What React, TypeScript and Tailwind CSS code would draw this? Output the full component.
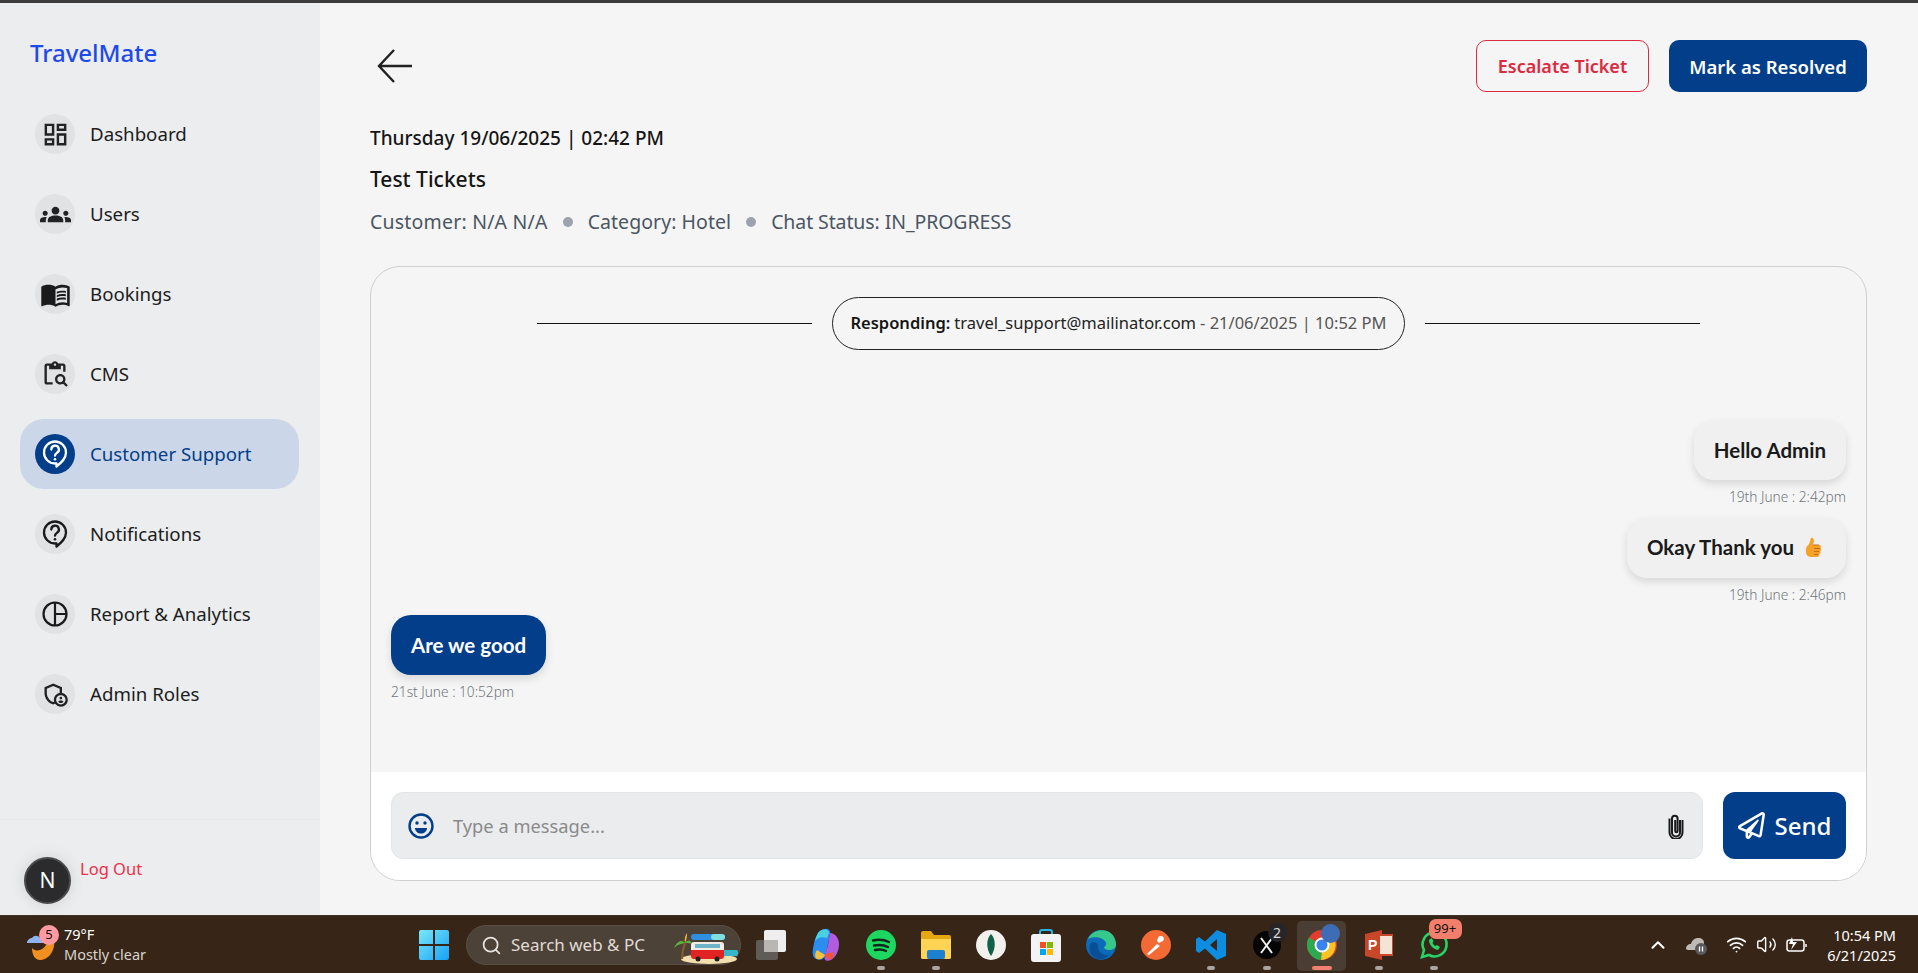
import React from "react";
import { MdOutlineDashboard, MdGroups, MdMenuBook, MdOutlineContentPasteSearch, MdOutlineAdminPanelSettings } from "react-icons/md";
import { FaRegPaperPlane } from "react-icons/fa";
import { Search, ChevronUp, Wifi, Volume2 } from "lucide-react";

const ChartIcon = () => (
  <svg width="26" height="26" viewBox="0 0 26 26" fill="none" stroke="#1a1a1a" strokeWidth="2.2">
    <circle cx="13" cy="13" r="11.5" />
    <path d="M13 1.5V24.5M13 13H24.5" />
  </svg>
);

const QuestionBubble = ({ color }: { color: string }) => (
  <svg width="26" height="29" viewBox="0 0 26 29" fill="none" stroke={color} strokeWidth="2.3" strokeLinejoin="round">
    <path d="M13 1.500a11 11 0 0 1 11 11c0 6-4.500 10-9.500 14v-3H13a10.500 10.500 0 0 1 0-22z" />
    <path d="M9.300 9.500a3.800 3.800 0 1 1 5.500 3.400c-1.200.7-1.800 1.400-1.800 2.800" strokeLinecap="round" />
    <circle cx="13" cy="19.200" r="1.300" fill={color} stroke="none" />
  </svg>
);

const nav = [
  { label: "Dashboard", icon: <MdOutlineDashboard size={29} color="#222" /> },
  { label: "Users", icon: <MdGroups size={31} color="#222" /> },
  { label: "Bookings", icon: <MdMenuBook size={31} color="#1a1a1a" /> },
  { label: "CMS", icon: <MdOutlineContentPasteSearch size={28} color="#222" /> },
  { label: "Customer Support", icon: <QuestionBubble color="#fff" />, active: true },
  { label: "Notifications", icon: <QuestionBubble color="#1a1a1a" /> },
  { label: "Report & Analytics", icon: <ChartIcon /> },
  { label: "Admin Roles", icon: <MdOutlineAdminPanelSettings size={28} color="#222" /> },
];

const Sidebar = () => (
  <aside className="w-[320px] shrink-0 bg-[#ebedef] flex flex-col">
    <div className="pl-[30px] pt-[33px] h-[96px] text-[24px] leading-[34px] text-[#1d4ae8] font-medium">TravelMate</div>
    <nav className="px-5 flex flex-col gap-[10px]">
      {nav.map((n) => (
        <div key={n.label} className={`h-[70px] w-[279px] rounded-[24px] pl-[15px] flex items-center gap-[15px] ${n.active ? "bg-[#cbd7e8] text-[#033e8a]" : "text-[#1c1c1c]"}`}>
          <span className={`w-10 h-10 rounded-full flex items-center justify-center ${n.active ? "bg-[#033e8a]" : "bg-[#e0e2e4]"}`}>{n.icon}</span>
          <span className="text-[18.700px] leading-6">{n.label}</span>
        </div>
      ))}
    </nav>
    <div className="flex-1" />
    <div className="h-[96px] border-t border-[#e4e6e8] pl-6 pt-[37px] flex items-start gap-[9px]">
      <span className="w-[47px] h-[47px] rounded-full bg-[#2b2b2d] border-2 border-[#4a4a4c] flex items-center justify-center text-white text-[21px] shadow-[0_0_16px_rgba(0,0,0,0.12)]">N</span>
      <span className="text-[#f0304a] text-[16.500px] leading-[22px] mt-[1px]">Log Out</span>
    </div>
  </aside>
);

const Dot = () => <span className="w-[10px] h-[10px] rounded-full bg-[#9ca3af] mx-[15px]" />;

const Bubble = ({ text, time, mine, extra }: { text: string; time: string; mine?: boolean; extra?: React.ReactNode }) => (
  <div className={`flex flex-col ${mine ? "items-end" : "items-start"}`}>
    <div className={`h-[60px] px-5 rounded-[20px] flex items-center gap-[10px] text-[20.500px] font-['Lato',sans-serif] font-bold shadow-[0_4px_8px_rgba(0,0,0,0.12)] ${mine ? "bg-[#f0f0f0] text-[#1a1a1a]" : "bg-[#033e8a] text-white"}`}>
      {text}
      {extra}
    </div>
    <div className="text-[13.700px] leading-[18px] mt-[8px] font-light text-[#70757c]">{time}</div>
  </div>
);

const Thumb = () => (
  <svg width="18" height="21" viewBox="0 0 18 21" className="mr-[4px]">
    <path d="M7 1c2-1 3 1 3 3l-1 4h6c2 0 2.500 2 1.500 3 1 1 .8 2.500-.2 3 .6 1 .3 2.400-.8 3 .2 1.500-.8 3-2.500 3H8c-3 0-6-1-6-5v-3c0-2 1.500-3 3-5 1-1.500 1-4 2-6z" fill="#f4a22c" />
    <path d="M9 8h6M10 11.500h6M10 14.500h5M10 17.500h4" stroke="#c96f12" strokeWidth="1" />
  </svg>
);

const Main = () => (
  <main className="flex-1 min-w-0 bg-[#f5f5f5] pl-[50px] pr-[51px] pt-[37px] pb-[34px] flex flex-col">
    <header className="flex items-start justify-between h-[54px]">
      <svg width="36" height="34" viewBox="0 0 36 34" className="ml-[7px] mt-[9px]" fill="none" stroke="#222" strokeWidth="2.400">
        <path d="M35 17H2M17 1L2 17l15 16" />
      </svg>
      <div className="flex gap-5">
        <button className="w-[173px] h-[52px] rounded-[10px] border border-[#dc2a42] text-[#dc2a42] text-[18px] font-semibold pt-[1px]">Escalate Ticket</button>
        <button className="w-[198px] h-[52px] rounded-[10px] bg-[#033e8a] text-white text-[18.500px] font-semibold pt-[1px]">Mark as Resolved</button>
      </div>
    </header>
    <div className="mt-[29px] text-[19px] leading-[30px] font-medium text-[#151515]">Thursday 19/06/2025 | 02:42 PM</div>
    <div className="mt-[11px] text-[21px] leading-[30px] font-medium text-[#151515]">Test Tickets</div>
    <div className="mt-[13px] flex items-center text-[19.500px] leading-[30px] text-[#4b5563]">
      <span className="tracking-[0.2px]">Customer: N/A N/A</span>
      <Dot />
      <span className="tracking-[0.05px]">Category: Hotel</span>
      <Dot />
      <span className="tracking-[-0.1px]">Chat Status: IN_PROGRESS</span>
    </div>
    <section className="mt-[29px] flex-1 border border-[#cfcfcf] rounded-[30px] overflow-hidden flex flex-col">
      <div className="flex-1 px-5 pt-[30px]">
        <div className="flex items-center justify-center gap-5">
          <span className="w-[275px] h-px bg-[#111]" />
          <div className="h-[53px] w-[573px] rounded-full border border-[#222] flex items-center justify-center text-[16.500px] text-[#333]">
            <b className="font-semibold text-[#151515]">Responding:</b>
            <span className="ml-1 text-[#222]">travel_support@mailinator.com</span>
            <span className="ml-1 text-[#555]">- 21/06/2025 | 10:52 PM</span>
          </div>
          <span className="w-[275px] h-px bg-[#111]" />
        </div>
        <div className="mt-[70px] flex flex-col gap-[11.500px]">
          <Bubble mine text="Hello Admin" time="19th June : 2:42pm" />
          <Bubble mine text="Okay Thank you" time="19th June : 2:46pm" extra={<Thumb />} />
          <Bubble text="Are we good" time="21st June : 10:52pm" />
        </div>
      </div>
      <div className="h-[108px] bg-white px-5 pt-[20px] flex gap-5">
        <div className="flex-1 h-[67px] rounded-[12px] bg-[#ebecee] border border-[#e3e4e6] pl-4 pr-[18px] flex items-center">
          <svg width="26" height="26" viewBox="0 0 26 26">
            <circle cx="13" cy="13" r="11.500" fill="none" stroke="#033e8a" strokeWidth="2.400" />
            <circle cx="9" cy="10" r="1.700" fill="#033e8a" />
            <circle cx="17" cy="10" r="1.700" fill="#033e8a" />
            <path d="M7 15h12c0 3.500-3 5.500-6 5.500S7 18.500 7 15z" fill="#033e8a" />
          </svg>
          <span className="ml-[19px] flex-1 text-[18.300px] text-[#8a8a8a]">Type a message...</span>
          <svg width="16" height="26" viewBox="0 0 16 26" fill="none" stroke="#1a1a1a" strokeWidth="2">
            <path d="M12 7v12.500a4 4 0 0 1-8 0V5.500a2.800 2.800 0 0 1 5.600 0V18a1.200 1.200 0 0 1-2.400 0V7" />
            <path d="M14.500 7v12.500a6.500 6.500 0 0 1-13 0V5.500" />
          </svg>
        </div>
        <button className="w-[123px] h-[67px] rounded-[12px] bg-[#033e8a] text-white text-[24px] font-medium flex items-center justify-center gap-[10px]">
          <FaRegPaperPlane size={27} />
          Send
        </button>
      </div>
    </section>
  </main>
);

const Slot = ({ children, dot, active, cls }: { children: React.ReactNode; dot?: boolean; active?: boolean; cls?: string }) => (
  <div className={`relative w-[55px] h-[52px] flex items-center justify-center ${cls ?? ""}`}>
    {active && <span className="absolute inset-x-[3px] top-[2px] bottom-0 rounded-[5px] bg-[#4a3d33]" />}
    <span className="relative flex">{children}</span>
    {dot && <span className={`absolute bottom-[1px] h-[4px] rounded-full ${active ? "w-5 bg-[#f28070]" : "w-2 bg-[#a9a49f]"}`} />}
  </div>
);

const Count = ({ t, cls }: { t: string; cls: string }) => (
  <span className={`absolute flex items-center justify-center text-[#111] ${cls}`}>{t}</span>
);

const Taskbar = () => (
  <footer className="h-[58px] shrink-0 bg-[#372517] border-t border-[#3f3126] relative flex items-center text-white">
    <div className="absolute left-[25px] top-[8px] flex items-center">
      <div className="relative w-[40px] h-[40px]">
        <svg width="40" height="40" viewBox="0 0 40 40">
          <path d="M7 24c4 5 14 2 16-8 3 0 6-2 6-2 2 12-5 22-14 22-5 0-8-5-8-12z" fill="#ef9021" />
          <path d="M2 19c0-3 3-5 5-5 2-3 6-3 8 0 3 0 5 2 5 5z" fill="#8fb4f2" />
        </svg>
        <span className="absolute left-[14px] top-[1px] w-5 h-5 rounded-full bg-[#ff9aa2] text-[#111] text-[13px] flex items-center justify-center">5</span>
      </div>
      <div className="ml-[-1px] text-[14.500px] leading-[20px]">
        <div>79°F</div>
        <div className="text-[#d8d3ce]">Mostly clear</div>
      </div>
    </div>
    <div className="absolute left-[419px] top-[3px] flex items-center h-[52px]">
      <svg width="30" height="30" viewBox="0 0 30 30" className="mr-[17px]">
        <defs>
          <linearGradient id="w" x1="0" y1="0" x2="1" y2="1">
            <stop offset="0" stopColor="#7ae8fb" />
            <stop offset="1" stopColor="#16a0f5" />
          </linearGradient>
        </defs>
        <path d="M0 2a2 2 0 0 1 2-2h12v14H0zM16 0h12a2 2 0 0 1 2 2v12H16zM0 16h14v14H2a2 2 0 0 1-2-2zM16 16h14v12a2 2 0 0 1-2 2H16z" fill="url(#w)" />
      </svg>
      <div className="w-[275px] h-[40px] rounded-full bg-[#4d4237] border border-[#5a4f44] flex items-center pl-[14px] text-[#e0dbd6] text-[17px] relative">
        <Search size={21} color="#e6e2de" />
        <span className="ml-[9px]">Search web &amp; PC</span>
        <svg width="66" height="32" viewBox="0 0 66 32" className="absolute right-[1px] top-[6px]">
          <ellipse cx="36" cy="27" rx="28" ry="5" fill="#f2dfae" />
          <path d="M44 24h20c2-3 1-5 0-6H44z" fill="#35b7c9" />
          <path d="M9 27c0-6 1-11 3-16" stroke="#8a5a2b" strokeWidth="2.200" fill="none" />
          <path d="M12 11C7 6 3 12 1 16c3-3 6-4 11-5 3-4 6-3 7 1-2-1-4-1-7-1z" fill="#5bb33c" />
          <path d="M12 11c-1-4 0-7 2-10 0 3 0 6-2 10z" fill="#e8b92e" />
          <rect x="18" y="10" width="33" height="17" rx="3" fill="#e02424" />
          <path d="M18 13a3 3 0 0 1 3-3h27a3 3 0 0 1 3 3v5H18z" fill="#f3ece4" />
          <rect x="22" y="12" width="25" height="4" fill="#6fb5c9" />
          <rect x="18" y="2" width="34" height="6" rx="3" fill="#2f8fe0" />
          <rect x="38" y="2" width="14" height="6" rx="3" fill="#7fe0e0" />
          <circle cx="25" cy="27" r="2.500" fill="#222" />
          <circle cx="44" cy="27" r="2.500" fill="#222" />
        </svg>
      </div>
      <div className="ml-[2px] flex">
        <Slot>
          <svg width="30" height="30" viewBox="0 0 30 30">
            <rect x="0" y="10" width="22" height="20" rx="2" fill="#5f5c58" />
            <rect x="8" y="0" width="22" height="22" rx="2" fill="#eeeeee" />
            <rect x="8" y="10" width="14" height="12" fill="#b9b7b4" />
          </svg>
        </Slot>
        <Slot>
          <svg width="30" height="34" viewBox="0 0 30 34">
            <path d="M9 3c6-4 11-2 10 3L15 26c-1 5-6 7-10 5-3-1-4-5-3-10 1-7 3-15 7-18z" fill="#2d8cf0" />
            <path d="M19 5c5 0 9 5 9 11 0 7-3 13-8 16-4 2-8 0-6-4l3-11z" fill="#b05be0" />
            <path d="M14 26c1 4 3 6 6 5 3-1 3-4 2-7z" fill="#f0563a" />
            <path d="M9 3c-2 1-4 6-5 10 3-3 6-5 12-3l2-5c0-3-4-5-9-2z" fill="#4ad1e0" />
            <path d="M6 22c-2 3-3 7 0 9 3 1 6 0 8-4z" fill="#f3c13a" />
          </svg>
        </Slot>
        <Slot dot>
          <svg width="30" height="30" viewBox="0 0 30 30">
            <circle cx="15" cy="15" r="15" fill="#1ed760" />
            <path d="M7 10.500c6-1.500 11-1 16 1.500M8 15.500c5-1 10-.6 14 1.500M9 20c4-.8 8-.5 11 1" stroke="#11261a" strokeWidth="2.400" strokeLinecap="round" fill="none" />
          </svg>
        </Slot>
        <Slot dot>
          <svg width="30" height="28" viewBox="0 0 30 28">
            <path d="M0 2a2 2 0 0 1 2-2h8l3 4h15a2 2 0 0 1 2 2v20a2 2 0 0 1-2 2H2a2 2 0 0 1-2-2z" fill="#e5a712" />
            <path d="M0 8h30v18a2 2 0 0 1-2 2H2a2 2 0 0 1-2-2z" fill="#ffd455" />
            <rect x="6" y="19" width="18" height="9" rx="2" fill="#1d7fcf" />
          </svg>
        </Slot>
        <Slot>
          <svg width="30" height="30" viewBox="0 0 30 30">
            <circle cx="15" cy="15" r="15" fill="#f3f1ee" />
            <path d="M15 4c5 5 5 15 0 22-5-7-5-17 0-22z" fill="#116149" />
          </svg>
        </Slot>
        <Slot>
          <svg width="30" height="34" viewBox="0 0 30 34">
            <path d="M9 8V4a2 2 0 0 1 2-2h8a2 2 0 0 1 2 2v4" stroke="#28b6e8" strokeWidth="2" fill="none" />
            <rect x="0" y="6" width="30" height="28" rx="3" fill="#f3f3f3" />
            <rect x="9" y="14" width="6" height="6" fill="#f25022" />
            <rect x="16" y="14" width="6" height="6" fill="#7fba00" />
            <rect x="9" y="21" width="6" height="6" fill="#00a4ef" />
            <rect x="16" y="21" width="6" height="6" fill="#ffb900" />
          </svg>
        </Slot>
        <Slot>
          <svg width="30" height="30" viewBox="0 0 30 30">
            <circle cx="15" cy="15" r="15" fill="#0c6bb8" />
            <path d="M2 9C6 1 14-1 21 1c6 2 9 8 9 14 0 3-3 5-7 5-3 0-5-1-5-3 2-1 3-3 1-6-3-4-12-5-17-2z" fill="#35c88a" />
            <path d="M12 16c0 5 4 10 11 9-3 3-6 5-11 4-6-1-10-7-8-15 2-3 8-2 8 2z" fill="#0a4f96" />
          </svg>
        </Slot>
        <Slot>
          <svg width="30" height="30" viewBox="0 0 30 30">
            <circle cx="15" cy="15" r="15" fill="#f46a35" />
            <path d="M6 24l10-10 3 2-11 9zM17 8a3 3 0 1 1 5 3l-4 2-2-2z" fill="#fff" />
          </svg>
        </Slot>
        <Slot dot>
          <svg width="30" height="30" viewBox="0 0 30 30">
            <path d="M21 0l9 4v22l-9 4-12-11.500L3 23l-3-2V9l3-2 6 4.500zM21 9l-7 6 7 6z" fill="#0c8de0" />
          </svg>
        </Slot>
        <Slot dot cls="ml-[1px]">
          <svg width="28" height="28" viewBox="0 0 28 28">
            <circle cx="14" cy="14" r="14" fill="#050505" />
            <path d="M8 7l11 15M19 7L8 22" stroke="#eee" strokeWidth="2" />
          </svg>
          <Count t="2" cls="left-[15px] top-[-8px] w-[19px] h-[19px] rounded-full bg-[#26262a] !text-[#ddd] text-[14px]" />
        </Slot>
        <Slot dot active>
          <svg width="30" height="30" viewBox="0 0 30 30">
            <circle cx="15" cy="15" r="15" fill="#e33b2e" />
            <path d="M15 15L27 8a15 15 0 0 1-13 22z" fill="#f7c325" />
            <path d="M15 15L14 30A15 15 0 0 1 2 7.500z" fill="#2da94f" />
            <circle cx="15" cy="15" r="6.500" fill="#3b82f0" stroke="#fff" strokeWidth="2" />
          </svg>
          <span className="absolute left-[14px] top-[-6px] w-[19px] h-[19px] rounded-full bg-[#3f6db5]" />
        </Slot>
        <Slot dot cls="ml-[2px]">
          <svg width="28" height="30" viewBox="0 0 28 30">
            <path d="M0 4l17-4v30L0 26z" fill="#c8472a" />
            <rect x="14" y="5" width="14" height="20" fill="#f6e3d8" stroke="#c8472a" strokeWidth="2" />
            <text x="3" y="20" fontSize="14" fontWeight="700" fill="#fff" fontFamily="Liberation Sans, sans-serif">P</text>
          </svg>
        </Slot>
        <Slot dot>
          <svg width="30" height="30" viewBox="0 0 30 30" fill="none" stroke="#25d366" strokeWidth="2.600">
            <path d="M3 27l2-7a12 12 0 1 1 5 5z" />
            <path d="M10 10c0 5 4 9 9 10l2-3-3-2-2 1c-1-1-2-2-2.500-3l1-2-2-3z" fill="#25d366" stroke="none" />
          </svg>
          <Count t="99+" cls="left-[10px] top-[-11px] w-[33px] h-[20px] rounded-[7px] bg-[#f27f6c] text-[13px]" />
        </Slot>
      </div>
    </div>
    <div className="ml-auto flex items-center">
      <ChevronUp size={22} color="#fff" strokeWidth={2.200} />
      <svg width="24" height="22" viewBox="0 0 24 22" className="ml-[16px]">
        <path d="M1 15c0-3 2-5 5-5 1-4 4-6 7-6 4 0 6 2 6 5v7H3c-1 0-2-1-2-1z" fill="#bfbab5" />
        <circle cx="16" cy="15" r="6" fill="#5a5a5e" />
        <path d="M14.500 12.500v5M17.500 12.500v5" stroke="#fff" strokeWidth="1.300" />
      </svg>
      <Wifi size={21} color="#fff" className="ml-[17px]" />
      <Volume2 size={21} color="#fff" className="ml-[9px]" strokeWidth={1.600} />
      <svg width="22" height="18" viewBox="0 0 22 18" fill="none" stroke="#fff" strokeWidth="1.500" className="ml-[9px]">
        <rect x="1" y="4" width="17" height="11" rx="2.500" />
        <path d="M20 8v3" />
        <path d="M6 1L3 8h4l-2 6 6-8H7z" fill="#fff" stroke="none" />
      </svg>
      <div className="ml-[18px] mr-[22px] w-[70px] text-right text-[14.500px] leading-[20px] whitespace-nowrap flex flex-col items-end">
        <span>10:54 PM</span>
        <span>6/21/2025</span>
      </div>
    </div>
  </footer>
);

export default function App() {
  return (
    <div className="h-[973px] w-full flex flex-col overflow-hidden font-['Noto_Sans',sans-serif]">
      <div className="h-[3px] shrink-0 bg-[#3c3c3c]" />
      <div className="flex-1 flex min-h-0">
        <Sidebar />
        <Main />
      </div>
      <Taskbar />
    </div>
  );
}
